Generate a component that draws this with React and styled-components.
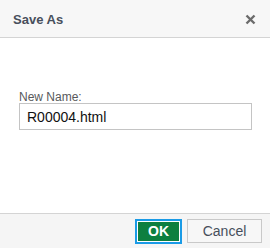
import React from "react";
import styled, { createGlobalStyle } from "styled-components";

const Global = createGlobalStyle`
  html, body {
    margin: 0;
    padding: 0;
    background: #ffffff;
  }
  body {
    font-family: "Liberation Sans", Arial, sans-serif;
  }
`;

const Dialog = styled.div`
  width: 270px;
  height: 248px;
  display: flex;
  flex-direction: column;
  background: #ffffff;
  box-sizing: border-box;
`;

const Header = styled.div`
  height: 37px;
  flex: none;
  display: flex;
  align-items: center;
  justify-content: space-between;
  padding: 0 13px 0 13px;
  background: #f7f7f7;
  border-bottom: 1px solid #d4d4d4;
`;

const Title = styled.div`
  font-size: 13px;
  font-weight: bold;
  color: #474f5c;
  margin-top: 1px;
`;

const CloseButton = styled.button`
  width: 14px;
  height: 14px;
  padding: 0;
  border: none;
  background: transparent;
  display: flex;
  align-items: center;
  justify-content: center;
  margin-top: 2px;
`;

const Body = styled.div`
  flex: 1;
  padding: 53px 18px 0 19px;
  display: flex;
  flex-direction: column;
`;

const Label = styled.label`
  font-size: 12px;
  color: #58595b;
  line-height: 12px;
`;

const NameInput = styled.input`
  height: 27px;
  box-sizing: border-box;
  border: 1px solid #c4c4c4;
  padding: 0 7px;
  font-family: "Liberation Sans", Arial, sans-serif;
  font-size: 14px;
  color: #111111;
  outline: none;
`;

const Footer = styled.div`
  height: 34px;
  flex: none;
  background: #f5f5f5;
  border-top: 1px solid #d4d4d4;
  display: flex;
  justify-content: flex-end;
  align-items: center;
  padding: 0 8px 0 0;
  gap: 7px;
`;

const Button = styled.button`
  box-sizing: border-box;
  font-family: "Liberation Sans", Arial, sans-serif;
  font-size: 14px;
  padding: 0;
  cursor: pointer;
  ${(p) =>
    p.$primary
      ? `
    width: 43px;
    height: 21px;
    background: #0d7f3f;
    color: #ffffff;
    font-weight: bold;
    border: 1px solid #ffffff;
    outline: 2px solid #1a9be6;
    outline-offset: 0;
  `
      : `
    width: 75px;
    height: 24px;
    background: #f7f7f7;
    color: #474f5c;
    border: 1px solid #c9c9c9;
  `}
`;

function CloseIcon() {
  return (
    <svg width="11" height="11" viewBox="0 0 11 11">
      <path
        d="M1.5 1.5 L9.5 9.5 M9.5 1.5 L1.5 9.5"
        stroke="#6b6b6b"
        strokeWidth="2.4"
        strokeLinecap="butt"
      />
    </svg>
  );
}

export default function App() {
  return (
    <>
      <Global />
      <Dialog>
        <Header>
          <Title>Save As</Title>
          <CloseButton aria-label="Close">
            <CloseIcon />
          </CloseButton>
        </Header>
        <Body>
          <Label>New Name:</Label>
          <NameInput defaultValue="R00004.html" />
        </Body>
        <Footer>
          <Button $primary>OK</Button>
          <Button>Cancel</Button>
        </Footer>
      </Dialog>
    </>
  );
}
